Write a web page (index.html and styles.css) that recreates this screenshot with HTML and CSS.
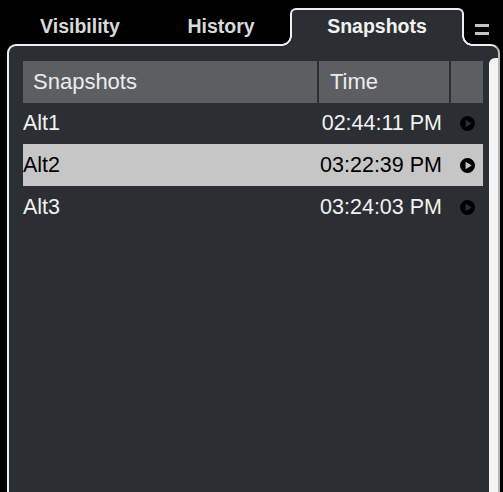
FILE: index.html
```html
<!DOCTYPE html>
<html>
<head>
<meta charset="utf-8">
<link rel="stylesheet" href="styles.css">
</head>
<body>
<div class="tabbar">
  <div class="tab tab-vis">Visibility</div>
  <div class="tab tab-hist">History</div>
  <div class="tab tab-active">Snapshots</div>
  <div class="menu"></div>
</div>
<div class="panel">
  <div class="table">
    <div class="thead">
      <div class="th th-name">Snapshots</div>
      <div class="th th-time">Time</div>
      <div class="th th-act"></div>
    </div>
    <div class="row">
      <div class="cell-name">Alt1</div>
      <div class="cell-time">02:44:11 PM</div>
      <div class="cell-act"><svg class="go" viewBox="0 0 14 14" width="15" height="15"><path fill-rule="evenodd" d="M7 0a7 7 0 1 1 0 14a7 7 0 1 1 0-14zM5.2 3.6L5.2 10.4L11 7z"/></svg></div>
    </div>
    <div class="row row-sel">
      <div class="cell-name">Alt2</div>
      <div class="cell-time">03:22:39 PM</div>
      <div class="cell-act"><svg class="go" viewBox="0 0 14 14" width="15" height="15"><path fill-rule="evenodd" d="M7 0a7 7 0 1 1 0 14a7 7 0 1 1 0-14zM5.2 3.6L5.2 10.4L11 7z"/></svg></div>
    </div>
    <div class="row">
      <div class="cell-name">Alt3</div>
      <div class="cell-time">03:24:03 PM</div>
      <div class="cell-act"><svg class="go" viewBox="0 0 14 14" width="15" height="15"><path fill-rule="evenodd" d="M7 0a7 7 0 1 1 0 14a7 7 0 1 1 0-14zM5.2 3.6L5.2 10.4L11 7z"/></svg></div>
    </div>
  </div>
  <div class="track"></div>
</div>
</body>
</html>
```

FILE: styles.css
```css
html, body {
  margin: 0;
  padding: 0;
  background: #000;
  overflow: hidden;
  height: 100%;
}
body {
  font-family: "Liberation Sans", Arial, sans-serif;
}
.tabbar {
  display: flex;
  align-items: flex-start;
  height: 46px;
  padding-left: 8px;
}
.tab {
  box-sizing: border-box;
  height: 38px;
  margin-top: 8px;
  border: 2px solid transparent;
  border-bottom: 0;
  padding-top: 5px;
  line-height: 22px;
  text-align: center;
  font-size: 19.5px;
  font-weight: bold;
  color: #d9d9d9;
}
.tab-vis { width: 144px; }
.tab-hist { width: 138px; }
.tab-active {
  position: relative;
  z-index: 1;
  width: 174px;
  border-color: #eeeeee;
  border-radius: 6px 6px 0 0;
  background: #2b2f33;
  color: #f2f2f2;
}
.tab-active::before,
.tab-active::after {
  content: "";
  position: absolute;
  bottom: 0;
  width: 10px;
  height: 10px;
}
.tab-active::before {
  left: -10px;
  background: radial-gradient(circle at 0 0, #000 7.5px, #eeeeee 8px, #eeeeee 9.5px, #2b2f33 10px);
}
.tab-active::after {
  right: -10px;
  background: radial-gradient(circle at 100% 0, #000 7.5px, #eeeeee 8px, #eeeeee 9.5px, #2b2f33 10px);
}
.menu {
  box-sizing: border-box;
  width: 14px;
  height: 11px;
  margin-top: 24px;
  margin-left: 11px;
  border-top: 3px solid #c4c4c4;
  border-bottom: 3px solid #c4c4c4;
}
.panel {
  box-sizing: border-box;
  display: flex;
  align-items: flex-start;
  gap: 6px;
  width: 493px;
  height: 470px;
  margin-top: -2px;
  margin-left: 7px;
  padding: 15px 0 0 14px;
  background: #2b2f33;
  border: 2px solid #eeeeee;
  border-right-color: #b8b8b8;
  border-bottom: 0;
  border-radius: 9px 9px 0 0;
}
.table {
  width: 460px;
}
.thead {
  display: grid;
  grid-template-columns: 294px 130px 32px;
  column-gap: 2px;
  height: 41px;
}
.th {
  background: #5b5f62;
  color: #ececec;
  font-size: 22px;
  line-height: 42px;
  white-space: nowrap;
}
.th-name { padding-left: 10px; }
.th-time { padding-left: 11px; }
.row {
  display: grid;
  grid-template-columns: 294px 130px 32px;
  column-gap: 2px;
  align-items: center;
  height: 42px;
  font-size: 21.5px;
  line-height: 26px;
  color: #f2f2f2;
  white-space: nowrap;
}
.row-sel {
  background: #c6c6c6;
  color: #000;
}
.cell-time {
  text-align: right;
  padding-right: 7px;
}
.cell-act {
  display: flex;
  justify-content: center;
  align-items: center;
}
.go {
  display: block;
  fill: #000;
}
.track {
  width: 9px;
  height: 440px;
  margin-top: -3px;
  background: #f3f3f3;
  border-top-left-radius: 6px;
}
```
